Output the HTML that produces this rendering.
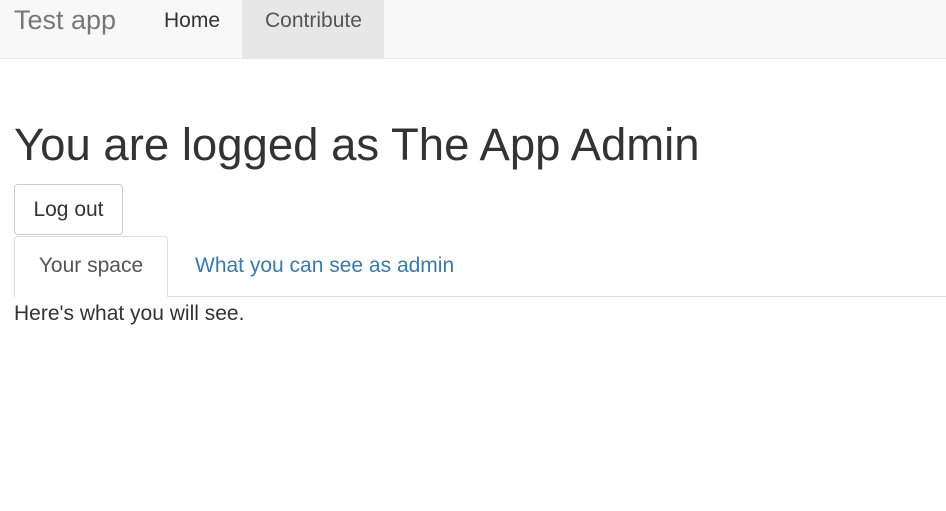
<!DOCTYPE html>
<html><head><style>
body{margin:0;width:946px;height:511px;font-family:"Liberation Sans",sans-serif;color:#333;background:#fff;position:relative;overflow:hidden}
.nav{position:absolute;left:0;top:0;width:946px;height:58px;background:#f8f8f8;border-bottom:1px solid #e7e7e7}
.brand{position:absolute;left:14px;top:5px;font-size:27px;color:#777}
.home{position:absolute;left:164px;top:9px;font-size:21px;color:#333}
.contrib{position:absolute;left:242px;top:0;width:142px;height:58px;background:#e7e7e7}
.contrib span{position:absolute;left:23px;top:9px;font-size:21px;color:#555}
h1{position:absolute;left:14px;top:119px;margin:0;font-weight:normal;font-size:45.5px;color:#333}
.btn{position:absolute;left:14px;top:184px;width:109px;height:51px;border:1px solid #ccc;border-radius:4px;box-sizing:border-box;font-size:21px;text-align:center;line-height:49px;color:#333}
.tabline{position:absolute;left:14px;top:296px;width:932px;height:1px;background:#ddd}
.tab{position:absolute;left:14px;top:236px;width:154px;height:61px;border:1px solid #ddd;border-bottom:none;border-radius:4px 4px 0 0;background:#fff;box-sizing:border-box;font-size:21px;text-align:center;line-height:58px;color:#555}
.tab2{position:absolute;left:195px;top:254px;font-size:21px;color:#337ab7}
.p{position:absolute;left:14px;top:302px;font-size:21px;color:#333}
</style></head><body>
<div class="nav"><div class="brand">Test app</div><div class="home">Home</div><div class="contrib"><span>Contribute</span></div></div>
<h1>You are logged as The App Admin</h1>
<div class="btn">Log out</div>
<div class="tabline"></div>
<div class="tab">Your space</div>
<div class="tab2">What you can see as admin</div>
<div class="p">Here's what you will see.</div>
</body></html>
